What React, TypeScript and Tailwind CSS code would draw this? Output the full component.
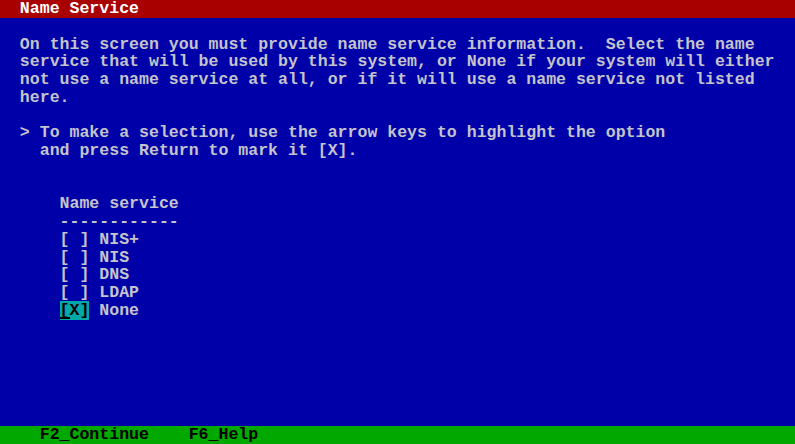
function Line({ children, className = "" }: { children?: React.ReactNode; className?: string }) {
  return <div className={`h-[17.76px] leading-[17.76px] whitespace-pre ${className}`}>{children}</div>;
}

const intro = [
  "  On this screen you must provide name service information.  Select the name",
  "  service that will be used by this system, or None if your system will either",
  "  not use a name service at all, or if it will use a name service not listed",
  "  here.",
];

const options = ["NIS+", "NIS", "DNS", "LDAP"];

export default function App() {
  return (
    <div
      className="flex h-[444px] w-[795px] flex-col overflow-hidden bg-[#0000a8] text-[16.5625px] font-bold text-[#c4c4cc]"
      style={{ fontFamily: '"Liberation Mono", "DejaVu Sans Mono", monospace' }}
    >
      <Line className="bg-[#a80000] text-white">{"  Name Service"}</Line>
      <Line />
      {intro.map((t) => (
        <Line key={t}>{t}</Line>
      ))}
      <Line />
      <Line>{"  > To make a selection, use the arrow keys to highlight the option"}</Line>
      <Line>{"    and press Return to mark it [X]."}</Line>
      <Line />
      <Line />
      <Line>{"      Name service"}</Line>
      <Line>{"      ------------"}</Line>
      {options.map((o) => (
        <Line key={o}>{`      [ ] ${o}`}</Line>
      ))}
      <Line>
        {"      "}
        <span className="relative bg-[#00a8a8] text-black">
          [X]
          <span className="absolute bottom-[1px] left-0 h-[2px] w-[9.94px] bg-black" />
        </span>
        {" None"}
      </Line>
      <div className="flex-1" />
      <Line className="bg-[#00a800] text-black">{"    F2_Continue    F6_Help"}</Line>
    </div>
  );
}
